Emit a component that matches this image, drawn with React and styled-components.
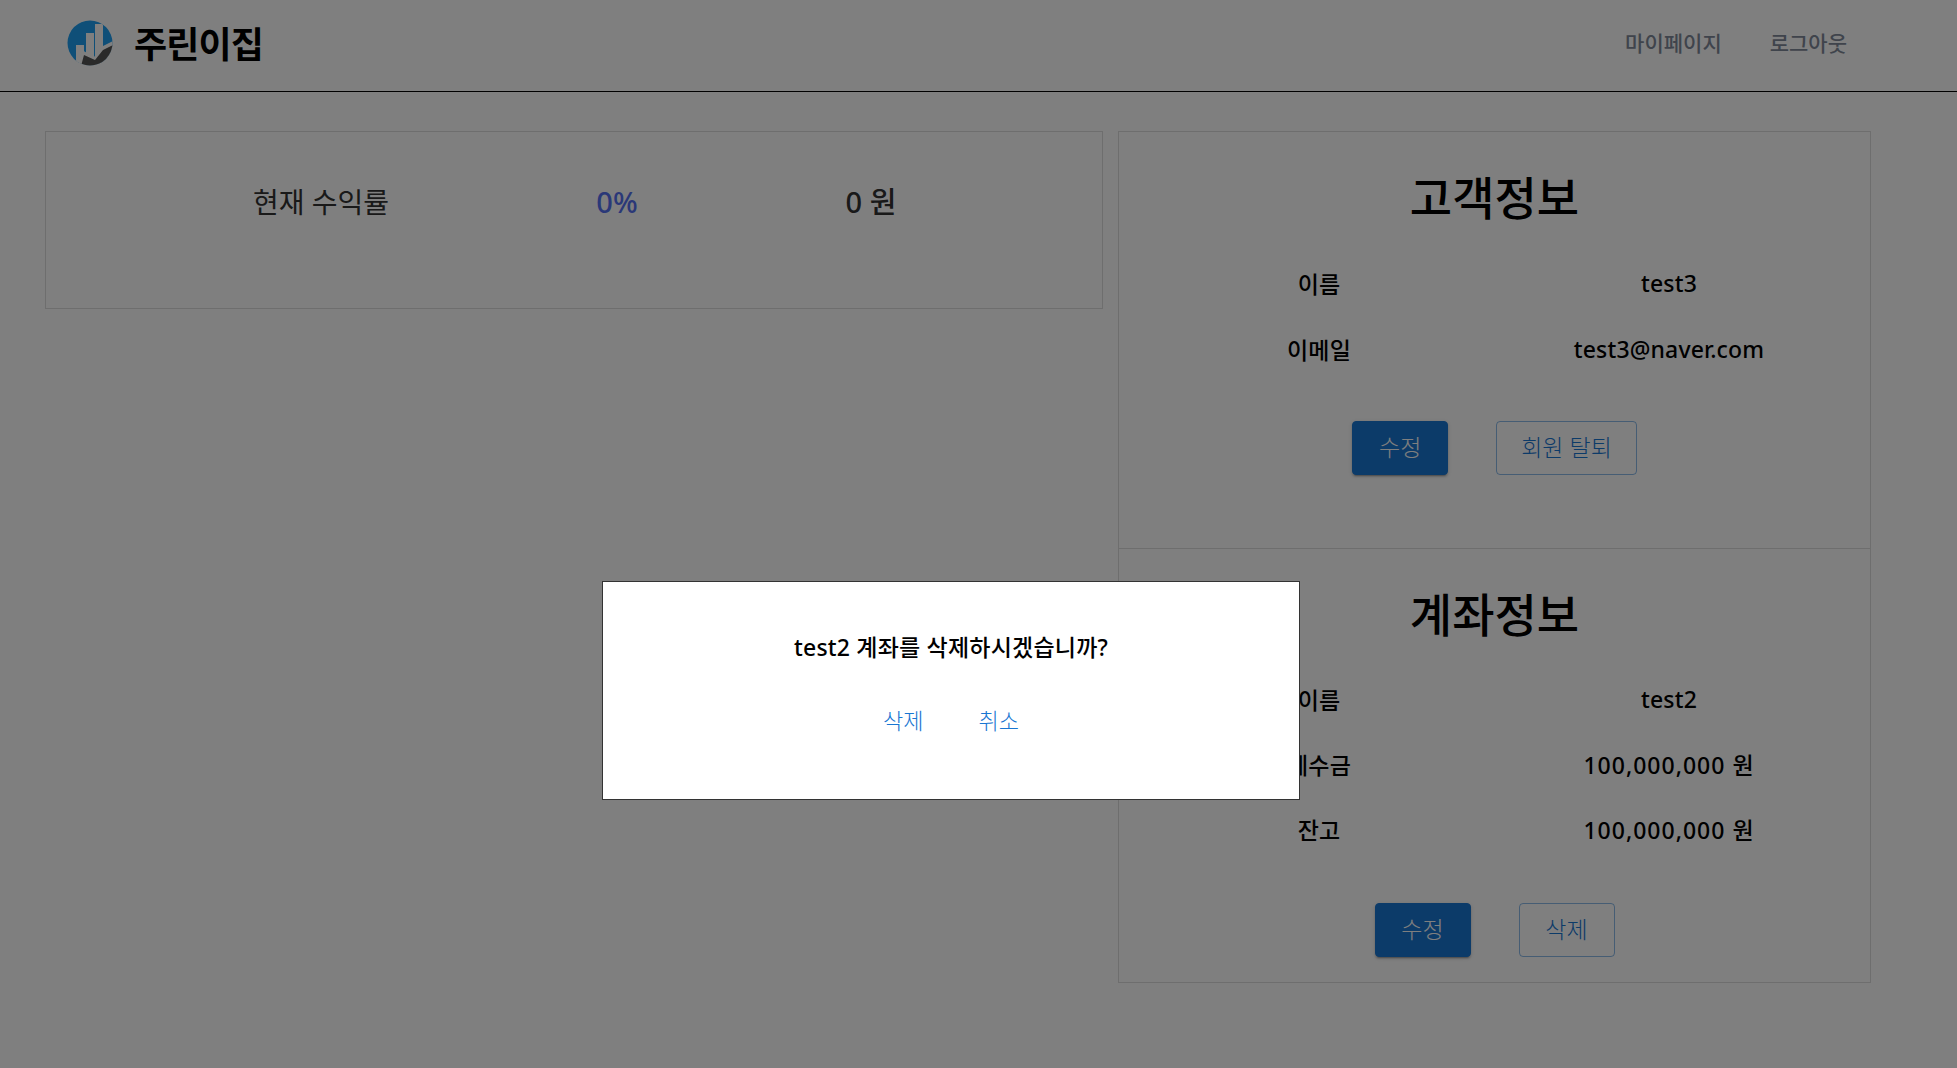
import React from "react";
import styled, { createGlobalStyle } from "styled-components";

const GlobalStyle = createGlobalStyle`
  html, body {
    margin: 0;
    padding: 0;
    background: #fff;
    font-family: "Noto Sans", "Noto Sans CJK KR", sans-serif;
    color: #000;
  }
`;

const Page = styled.div`
  min-height: 1068px;
  box-sizing: border-box;
`;

// header

const Header = styled.header`
  height: 92px;
  box-sizing: border-box;
  border-bottom: 1px solid #000;
  display: flex;
  align-items: center;
  justify-content: space-between;
  padding: 0 110px 6px 67px;
`;

const Brand = styled.div`
  display: flex;
  align-items: center;
  gap: 21px;
`;

const BrandName = styled.span`
  font-size: 36px;
  font-weight: 700;
  letter-spacing: -0.9px;
`;

const Nav = styled.nav`
  display: flex;
  gap: 48px;
  margin-bottom: 2px;
`;

const NavLink = styled.a`
  font-size: 21px;
  font-weight: 500;
  color: #7e8898;
`;

// body

const Main = styled.main`
  display: grid;
  grid-template-columns: 1058px 753px;
  gap: 15px;
  padding: 39px 86px 0 45px;
  align-items: start;
`;

const YieldPanel = styled.section`
  height: 178px;
  box-sizing: border-box;
  border: 1px solid #ddd;
  display: grid;
  grid-template-columns: 175px 200px 161px 70px 184px 70px;
  padding-top: 50px;
  font-size: 28px;
`;

const YieldCell = styled.div`
  grid-column: ${(p) => p.$col};
  display: flex;
  justify-content: center;
  white-space: nowrap;
  line-height: 40px;
  color: ${(p) => p.$color || "#333"};
  font-size: ${(p) => p.$size || 28}px;
  font-weight: ${(p) => p.$weight || 400};
`;

const InfoColumn = styled.div`
  display: flex;
  flex-direction: column;
`;

const InfoPanel = styled.section`
  height: ${(p) => p.$h}px;
  box-sizing: border-box;
  border: 1px solid #ddd;
  border-top: ${(p) => (p.$joined ? "none" : "1px solid #ddd")};
  padding-top: 30px;
`;

const Title = styled.h2`
  margin: 0 0 ${(p) => p.$gap}px;
  font-size: 46px;
  font-weight: 500;
  line-height: 70px;
  text-align: center;
`;

const InfoRow = styled.div`
  display: grid;
  grid-template-columns: 400px 300px;
  height: ${(p) => p.$h}px;
  font-size: 23px;
  align-items: center;
  text-align: center;
  font-weight: 500;
  letter-spacing: 0.15px;
`;

const Amount = styled.span`
  letter-spacing: 1px;
`;

const Buttons = styled.div`
  display: flex;
  justify-content: center;
  gap: 48px;
  margin-top: ${(p) => p.$top}px;
`;

const Button = styled.button`
  height: 54px;
  min-width: 96px;
  box-sizing: border-box;
  padding: 0 24px 5px;
  border-radius: 4px;
  font-family: inherit;
  font-size: 23px;
  font-weight: 300;
  border: 1px solid ${(p) => (p.$filled ? "#1976d2" : "rgba(25,118,210,0.5)")};
  background: ${(p) => (p.$filled ? "#1976d2" : "transparent")};
  color: ${(p) => (p.$filled ? "#fff" : "#1976d2")};
  box-shadow: ${(p) =>
    p.$filled
      ? "0 3px 1px -2px rgba(0,0,0,.2), 0 2px 2px rgba(0,0,0,.14), 0 1px 5px rgba(0,0,0,.12)"
      : "none"};
`;

// dialog

const Scrim = styled.div`
  position: fixed;
  inset: 0;
  background: rgba(0, 0, 0, 0.5);
`;

const Dialog = styled.div`
  position: fixed;
  left: 602px;
  top: 581px;
  width: 698px;
  height: 219px;
  box-sizing: border-box;
  background: #fff;
  border: 1px solid #333;
  display: flex;
  flex-direction: column;
  align-items: center;
  padding-top: 48px;
`;

const DialogText = styled.p`
  margin: 0 0 39px;
  font-size: 23px;
  font-weight: 500;
  line-height: 34px;
  letter-spacing: 0.2px;
`;

const DialogActions = styled.div`
  display: flex;
  gap: 55px;
`;

const DialogAction = styled.a`
  font-size: 22px;
  font-weight: 300;
  line-height: 34px;
  color: #1976d2;
`;

const Logo = () => (
  <svg width="46" height="46" viewBox="0 0 46 46">
    <defs>
      <clipPath id="logoClip">
        <circle cx="23" cy="23" r="22.5" />
      </clipPath>
    </defs>
    <g clipPath="url(#logoClip)">
      <rect width="46" height="46" fill="#1e9ef0" />
      <rect x="9" y="25" width="8" height="21" fill="#fff" />
      <rect x="19" y="13" width="8" height="33" fill="#fff" />
      <rect x="28" y="4" width="8" height="32" fill="#fff" />
      <path d="M8 46 L15 30 L27 37 L34 27 L46 21 L46 46 Z" fill="#fff" />
      <path d="M14 46 L17 35 L28 40 L36 30 L46 25 L46 46 Z" fill="#555" />
    </g>
  </svg>
);

export default function App() {
  return (
    <Page>
      <GlobalStyle />
      <Header>
        <Brand>
          <Logo />
          <BrandName>주린이집</BrandName>
        </Brand>
        <Nav>
          <NavLink>마이페이지</NavLink>
          <NavLink>로그아웃</NavLink>
        </Nav>
      </Header>
      <Main>
        <YieldPanel>
          <YieldCell $col={2}>현재 수익률</YieldCell>
          <YieldCell $col={4} $color="#5570f0" $weight={500} $size={29}>0%</YieldCell>
          <YieldCell $col={6} $weight={500} $size={29}>0 원</YieldCell>
        </YieldPanel>
        <InfoColumn>
          <InfoPanel $h={418}>
            <Title $gap={18}>고객정보</Title>
            <InfoRow $h={66}><span>이름</span><span>test3</span></InfoRow>
            <InfoRow $h={66}><span>이메일</span><span>test3@naver.com</span></InfoRow>
            <Buttons $top={39}>
              <Button $filled>수정</Button>
              <Button>회원 탈퇴</Button>
            </Buttons>
          </InfoPanel>
          <InfoPanel $h={434} $joined>
            <Title $gap={17}>계좌정보</Title>
            <InfoRow $h={65}><span>이름</span><span>test2</span></InfoRow>
            <InfoRow $h={65}><span>예수금</span><Amount>100,000,000 원</Amount></InfoRow>
            <InfoRow $h={65}><span>잔고</span><Amount>100,000,000 원</Amount></InfoRow>
            <Buttons $top={42}>
              <Button $filled>수정</Button>
              <Button>삭제</Button>
            </Buttons>
          </InfoPanel>
        </InfoColumn>
      </Main>
      <Scrim />
      <Dialog>
        <DialogText>test2 계좌를 삭제하시겠습니까?</DialogText>
        <DialogActions>
          <DialogAction>삭제</DialogAction>
          <DialogAction>취소</DialogAction>
        </DialogActions>
      </Dialog>
    </Page>
  );
}
